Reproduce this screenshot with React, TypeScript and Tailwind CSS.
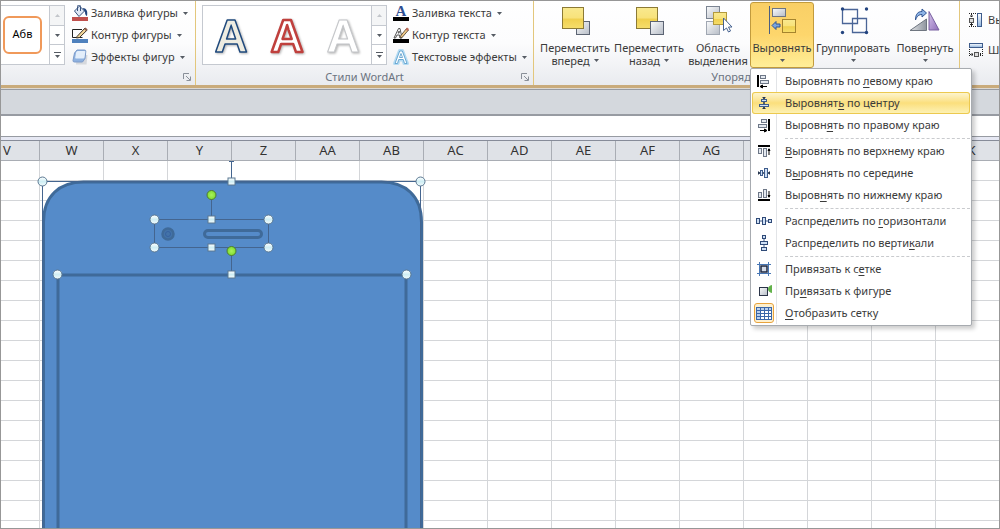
import { ReactNode } from "react";

type IconProps = { children: ReactNode; size?: string; box?: string };

function Svg({ children, size = "size-4", box = "0 0 16 16" }: IconProps) {
  return (
    <svg viewBox={box} className={`${size} shrink-0`} fill="none" aria-hidden="true">
      {children}
    </svg>
  );
}

/* small ribbon icons */

const FillIcon = (
  <Svg>
    <path d="M2.5 6 7.5 1l5 5-5.5 5.5z" fill="#dfe8f5" stroke="#38537f" />
    <path d="M5.5 6V1.5a1.5 1.5 0 0 1 3 0V6" stroke="#38537f" />
    <path d="M10.5 3c4 0 5.500 3 4.500 8-1.500-.5-2-2-2-4z" fill="#24467f" />
    <rect y="12" width="16" height="4" fill="#c0504d" />
  </Svg>
);

const OutlineIcon = (
  <Svg>
    <path d="M10 2.5H.5v8h10" stroke="#222" />
    <path d="M5 9.5 13 1l2.200 2-7.700 7.500-3 .5z" fill="#f4d79a" stroke="#3d3427" />
    <path d="m12 2 1.500-1.500 2 2L14 4z" fill="#8c5a4a" />
    <rect y="12" width="16" height="4" fill="#4f81bd" />
  </Svg>
);

const EffectsIcon = (
  <Svg>
    <path d="M5 6h10.500l-1 9.500H4z" fill="#c9ccd2" opacity=".7" />
    <path d="M5 1h7.500q1.500 0 1.300 1.500L13 9.500 10.500 13h-8Q.8 13 1 11.500L2.500 4z" fill="#8fb2e0" stroke="#7c9bca" />
    <path d="M5.500 2h7q1 0 .8 1l-.8 5.500q-.2 1-1.200 1H4q-1 0-.8-1L4.200 3z" fill="#e3eefb" />
  </Svg>
);

const TextFillIcon = (
  <Svg>
    <text x="8" y="11" textAnchor="middle" fontFamily="Liberation Serif, serif" fontSize="15" fontWeight="700" fill="#2f4f93">А</text>
    <rect y="12" width="16" height="4" fill="#000" />
  </Svg>
);

const TextOutlineIcon = (
  <Svg>
    <path d="M1 11 5.500 1.500H7L9 11H7l-.5-3H4l-1.500 3zM5 6h1.200V4z" stroke="#555" />
    <path d="M7.500 9l6-7.500 2 1.500-6 7-2.500 1z" fill="#f0c987" stroke="#4a3d2c" strokeWidth=".8" />
    <path d="m12.500 2.500 1.500-2L16 2l-1.500 2z" fill="#c06a5a" />
    <rect y="12" width="16" height="4" fill="#000" />
  </Svg>
);

const TextEffectsIcon = (
  <Svg>
    <path d="M1.500 14.500 6.500 1.500h3l5 13h-3.500L10 11H6l-1 3.500z" fill="#fff" stroke="#b5dbf2" strokeWidth="3" strokeLinejoin="round" />
    <path d="M2 14.500 6.700 2h2.600L14 14.500h-2.500l-1.200-4H5.700l-1.200 4zM6.500 8.500h3L8 4.500z" fill="#fff" stroke="#5fa2cf" strokeWidth=".9" />
  </Svg>
);

/* large ribbon icons */

const Gradients = () => (
  <svg className="absolute size-0" aria-hidden="true">
    <defs>
      <linearGradient id="yellow" x2="0" y2="1">
        <stop offset="0" stopColor="#f9e98f" />
        <stop offset=".5" stopColor="#f8e27a" />
        <stop offset=".55" stopColor="#f0d04f" />
        <stop offset="1" stopColor="#f6de6c" />
      </linearGradient>
      <linearGradient id="grey" x2="1" y2="1">
        <stop offset="0" stopColor="#fafbfc" />
        <stop offset="1" stopColor="#b6bcc6" />
      </linearGradient>
      <linearGradient id="purple" x2="1" y2="1">
        <stop offset="0" stopColor="#d6c4ec" />
        <stop offset="1" stopColor="#8f6db8" />
      </linearGradient>
      <linearGradient id="slope" x2="1" y2="0">
        <stop offset="0" stopColor="#e3e5e8" />
        <stop offset="1" stopColor="#8f959e" />
      </linearGradient>
      <linearGradient id="cell" x2="0" y2="1">
        <stop offset="0" stopColor="#fff" />
        <stop offset="1" stopColor="#8fb3dc" />
      </linearGradient>
      <linearGradient id="handle" x2="0" y2="1">
        <stop offset="0" stopColor="#fff" />
        <stop offset=".5" stopColor="#cfeef4" />
        <stop offset="1" stopColor="#f2fbfd" />
      </linearGradient>
      <radialGradient id="green">
        <stop offset="0" stopColor="#a9f25a" />
        <stop offset="1" stopColor="#7fdc30" />
      </radialGradient>
    </defs>
  </svg>
);

function Large({ children }: { children: ReactNode }) {
  return <Svg size="size-8" box="0 0 32 32">{children}</Svg>;
}

const ForwardIcon = (
  <Large>
    <rect x="17.500" y="15.500" width="13" height="13" fill="url(#grey)" stroke="#5c6473" />
    <rect x="3.500" y="1.500" width="21" height="21" fill="url(#yellow)" stroke="#8c7a35" />
  </Large>
);

const BackwardIcon = (
  <Large>
    <rect x="3.500" y="1.500" width="21" height="21" fill="url(#yellow)" stroke="#8c7a35" />
    <rect x="17.500" y="15.500" width="13" height="13" fill="url(#grey)" stroke="#5c6473" />
  </Large>
);

const SelectionIcon = (
  <Large>
    <rect x="4.500" y=".5" width="13" height="12" fill="url(#grey)" stroke="#7b8492" />
    <rect x="4.500" y="15.500" width="13" height="13" fill="url(#grey)" stroke="#a0a7b2" />
    <rect x="11.500" y="6.500" width="13" height="12" fill="url(#yellow)" stroke="#b39a3c" />
    <path d="M21.500 12v12.500l3-2.500 2 4 2-1-2-4H30z" fill="#fff" stroke="#45618f" />
  </Large>
);

const AlignIcon = (
  <Large>
    <path d="M3.500 0v28" stroke="#4b5f82" />
    <rect x="6.500" y="2.500" width="13" height="8" fill="url(#grey)" stroke="#6d7482" />
    <rect x="16.500" y="13.500" width="13" height="13" fill="url(#yellow)" stroke="#a5842d" />
    <path d="m6 19.500 4-4V18h4v3h-4v2.500z" fill="#79a5e0" stroke="#315592" />
  </Large>
);

const GroupIcon = (
  <Large>
    <path d="M5.500 3.500h15v14h-15zM15.500 12.500h14v14h-14z" stroke="#4a6597" strokeWidth="1.300" />
    <g fill="#23447f">
      <circle cx="5.500" cy="3" r="1.700" />
      <circle cx="29.500" cy="3" r="1.700" />
      <circle cx="5.500" cy="26.500" r="1.700" />
      <circle cx="29.500" cy="26.500" r="1.700" />
    </g>
  </Large>
);

const RotateIcon = (
  <Large>
    <path d="M20 5.500V24h10z" fill="url(#purple)" stroke="#7860a0" />
    <path d="M1 24.500 17.500 13v11.500z" fill="url(#slope)" stroke="#6f7680" />
    <path d="M6.500 14c0-6 2.500-8.500 6.500-8.500V3l4.500 4L13 11V8.500c-3 0-5 1.500-6.500 5.500z" fill="#8db4e6" stroke="#315592" />
  </Large>
);

const HeightIcon = (
  <Svg>
    <path d="M1 1.500h7M1 14.500h7M3.500 2v3M3.500 11v3" stroke="#222" strokeDasharray="1 1" />
    <path d="M2 4h3M2 12.500h3" stroke="#222" />
    <rect x="1.500" y="6.500" width="4" height="4" fill="#ddd" stroke="#555" />
    <rect x="9.500" y="1.500" width="4" height="13" fill="url(#cell)" stroke="#3e5c8c" />
  </Svg>
);

const WidthIcon = (
  <Svg>
    <rect x="1.500" y="1.500" width="13" height="4" fill="url(#cell)" stroke="#3e5c8c" />
    <path d="M1.500 7v7M14.500 7v7M2 12.500h12" stroke="#222" strokeDasharray="1 1" />
    <path d="M4 11v3M12.500 11v3" stroke="#222" />
    <rect x="6.500" y="10.500" width="4" height="4" fill="#ddd" stroke="#555" />
  </Svg>
);

/* menu icons */

const LeftIcon = (
  <Svg>
    <rect x="1" y="2" width="2" height="12" fill="#000" />
    <rect x="4.500" y="2.500" width="5" height="3" fill="#e4e9f0" stroke="#6d7787" />
    <rect x="4.500" y="7.500" width="8" height="3" fill="#e4e9f0" stroke="#6d7787" />
    <path d="M4 13.500h7M6.500 12v3L4 13.500z" fill="#000" stroke="#000" />
  </Svg>
);

const CenterIcon = (
  <Svg>
    <path d="M8 2v12" stroke="#27364f" strokeWidth="1.500" />
    <rect x="5.500" y="4.500" width="5" height="2" fill="#cfe0f5" stroke="#3e5c8c" />
    <rect x="3.500" y="9.500" width="9" height="2" fill="#cfe0f5" stroke="#3e5c8c" />
    <path d="M6 2h4L8 4zM6 14h4l-2-2z" fill="#27364f" />
  </Svg>
);

const RightIcon = (
  <Svg>
    <rect x="12" y="2" width="2" height="12" fill="#000" />
    <rect x="5.500" y="2.500" width="5" height="3" fill="#e4e9f0" stroke="#6d7787" />
    <rect x="2.500" y="7.500" width="8" height="3" fill="#e4e9f0" stroke="#6d7787" />
    <path d="M4 13.500h7M8.500 12v3l2.500-1.500z" fill="#000" stroke="#000" />
  </Svg>
);

const TopIcon = (
  <Svg>
    <rect x="2" y="2" width="12" height="2" fill="#000" />
    <rect x="2.500" y="5.500" width="3" height="5" fill="#e4e9f0" stroke="#6d7787" />
    <rect x="7.500" y="5.500" width="3" height="8" fill="#e4e9f0" stroke="#6d7787" />
    <path d="M13 5.500V12M12 7.500h2L13 6z" fill="#000" stroke="#000" />
  </Svg>
);

const MiddleIcon = (
  <Svg>
    <path d="M2 8h12" stroke="#27364f" strokeWidth="1.500" />
    <rect x="4.500" y="5.500" width="2" height="5" fill="#cfe0f5" stroke="#3e5c8c" />
    <rect x="8.500" y="3.500" width="3" height="9" fill="#cfe0f5" stroke="#3e5c8c" />
    <path d="M2 6v4l2-2zM14 6v4l-2-2z" fill="#27364f" />
  </Svg>
);

const BottomIcon = (
  <Svg>
    <rect x="2" y="12" width="12" height="2" fill="#000" />
    <rect x="2.500" y="5.500" width="3" height="5" fill="#e4e9f0" stroke="#6d7787" />
    <rect x="7.500" y="2.500" width="3" height="8" fill="#e4e9f0" stroke="#6d7787" />
    <path d="M13 4v6.500M12 8.500h2L13 10z" fill="#000" stroke="#000" />
  </Svg>
);

const HorizontalIcon = (
  <Svg>
    <path d="M1 8h14" stroke="#3e5c8c" />
    <rect x=".5" y="5.500" width="3" height="5" fill="#cfe0f5" stroke="#2f4a78" />
    <rect x="6.500" y="4.500" width="3" height="7" fill="#cfe0f5" stroke="#2f4a78" />
    <rect x="12.500" y="6.500" width="3" height="3" fill="#cfe0f5" stroke="#2f4a78" />
  </Svg>
);

const VerticalIcon = (
  <Svg>
    <path d="M8 1v14" stroke="#3e5c8c" />
    <rect x="6.500" y=".5" width="3" height="3" fill="#cfe0f5" stroke="#2f4a78" />
    <rect x="4.500" y="6.500" width="7" height="3" fill="#cfe0f5" stroke="#2f4a78" />
    <rect x="5.500" y="12.500" width="5" height="3" fill="#cfe0f5" stroke="#2f4a78" />
  </Svg>
);

const SnapGridIcon = (
  <Svg>
    <path d="M3.500 1v14M12.500 1v14M1 3.500h14M1 12.500h14" stroke="#4877b5" />
    <rect x="5" y="5" width="6" height="6" fill="#d5dbe6" stroke="#1c2740" strokeWidth="1.500" />
  </Svg>
);

const SnapShapeIcon = (
  <Svg>
    <rect x="3.500" y="4.500" width="8" height="8" fill="url(#grey)" stroke="#2b3448" />
    <path d="M16 2c-2.500.5-4 2-4 4s1.500 3.500 4 4z" fill="#63b24b" />
  </Svg>
);

const GridIcon = (
  <Svg>
    <rect x=".5" y="2.500" width="15" height="12" fill="#fff" stroke="#3a66a8" />
    <path d="M1 3h14v2.500H1zM1 3h3v11H1z" fill="#b9d0ee" />
    <path d="M4.500 3v11M8.500 3v11M12.500 3v11M1 5.500h14M1 8.500h14M1 11.500h14" stroke="#3a66a8" />
  </Svg>
);

const smallShape = [
  { label: "Заливка фигуры", icon: FillIcon },
  { label: "Контур фигуры", icon: OutlineIcon },
  { label: "Эффекты фигур", icon: EffectsIcon },
];

const smallText = [
  { label: "Заливка текста", icon: TextFillIcon },
  { label: "Контур текста", icon: TextOutlineIcon },
  { label: "Текстовые эффекты", icon: TextEffectsIcon },
];

// label is split around the underlined access key
type MenuItem = { label: [string, string, string]; icon: ReactNode; active?: boolean; checked?: boolean };

const menu: MenuItem[][] = [
  [
    { label: ["Выровнять по ", "л", "евому краю"], icon: LeftIcon },
    { label: ["Выровнят", "ь", " по центру"], icon: CenterIcon, active: true },
    { label: ["Выровн", "я", "ть по правому краю"], icon: RightIcon },
  ],
  [
    { label: ["", "В", "ыровнять по верхнему краю"], icon: TopIcon },
    { label: ["В", "ы", "ровнять по середине"], icon: MiddleIcon },
    { label: ["Выров", "н", "ять по нижнему краю"], icon: BottomIcon },
  ],
  [
    { label: ["Распределить по ", "г", "оризонтали"], icon: HorizontalIcon },
    { label: ["Распределить по верти", "к", "али"], icon: VerticalIcon },
  ],
  [
    { label: ["Привязать к с", "е", "тке"], icon: SnapGridIcon },
    { label: ["Пр", "и", "вязать к фигуре"], icon: SnapShapeIcon },
    { label: ["", "О", "тобразить сетку"], icon: GridIcon, checked: true },
  ],
];

const columns = ["W", "X", "Y", "Z", "AA", "AB", "AC", "AD", "AE", "AF", "AG", "AH", "AI", "AJ", "AK"];
const rows = Array.from({ length: 19 }, (_, i) => i);

function Arrow({ muted = false }: { muted?: boolean }) {
  return (
    <svg viewBox="0 0 5 3" className={`h-[3px] w-[5px] shrink-0 ${muted ? "text-[#c3c6cb]" : "text-[#555b63]"}`} aria-hidden="true">
      <path d={muted ? "M0 3h5L2.500 0z" : "M0 0h5L2.500 3z"} fill="currentColor" />
    </svg>
  );
}

function GalleryScroll() {
  return (
    <div className="flex w-[15px] flex-col divide-y divide-[#c5c9d0] border-l border-[#c5c9d0]">
      <button aria-label="Вверх" className="flex flex-1 items-center justify-center bg-[#f4f5f6]">
        <Arrow muted />
      </button>
      <button aria-label="Вниз" className="flex flex-1 items-center justify-center">
        <Arrow />
      </button>
      <button aria-label="Дополнительно" className="flex flex-1 flex-col items-center justify-center gap-0.5">
        <span className="h-px w-[7px] bg-[#555b63]" />
        <Arrow />
      </button>
    </div>
  );
}

function SmallButtons({ items }: { items: typeof smallShape }) {
  return (
    <div className="flex flex-col pt-px">
      {items.map((item) => (
        <button key={item.label} className="flex h-[22px] items-center gap-[3px] whitespace-nowrap">
          {item.icon}
          <span>{item.label}</span>
          <span className="pl-0.5">
            <Arrow />
          </span>
        </button>
      ))}
    </div>
  );
}

function GroupFooter({ title }: { title?: string }) {
  return (
    <div className="relative flex h-4 items-center justify-center text-[#6b7380]">
      {title}
      <button aria-label="Параметры" className="absolute top-1 right-1">
        <svg viewBox="0 0 8 8" className="size-2" fill="none" stroke="#8a9099" aria-hidden="true">
          <path d="M.5 6V.5H6M3 3l4 4M7.500 3.500v4h-4" />
        </svg>
      </button>
    </div>
  );
}

type LargeButtonProps = { icon: ReactNode; lines: [string, string?]; width: string; active?: boolean; arrow?: boolean };

function LargeButton({ icon, lines, width, active, arrow = true }: LargeButtonProps) {
  return (
    <button
      className={`flex h-[66px] shrink-0 flex-col items-center rounded-[3px] border pt-[3px] leading-[13px] whitespace-nowrap ${width} ${
        active ? "border-[#c29b3d] bg-linear-to-b from-[#f9cf66] via-[#fdd66c] to-[#ffee98]" : "border-transparent"
      }`}
    >
      {icon}
      <span className="pt-[3px]">{lines[0]}</span>
      <span className="flex h-[13px] items-center gap-1">
        {lines[1]}
        {arrow && <Arrow />}
      </span>
    </button>
  );
}

function AlignMenu() {
  return (
    <div className="absolute top-full left-0 z-20 w-[222px] rounded-[2px] border border-[#a7abb0] bg-white p-px shadow-[3px_3px_4px_rgba(0,0,0,0.2)]" role="menu">
      {menu.map((section, i) => (
        <div key={i}>
          {i > 0 && (
            <div className="flex h-1">
              <div className="w-[25px] border-r border-[#e2e4e7]" />
              <div className="ml-2 h-0 flex-1 self-center border-t border-dashed border-[#c9cbce]" />
            </div>
          )}
          {section.map((item) => (
            <button
              key={item.label.join("")}
              role="menuitem"
              className={`flex h-[22px] w-full items-center whitespace-nowrap ${
                item.active ? "rounded-[3px] bg-linear-to-b from-[#fdf6d4] via-[#fbdf7c] to-[#fdf3b8] ring-1 ring-[#ecc94f] ring-inset" : ""
              }`}
            >
              <span className={`flex h-full w-[25px] items-center justify-center border-r ${item.active ? "border-transparent" : "border-[#e2e4e7]"}`}>
                <span className={item.checked ? "rounded-[3px] border border-[#e8a33d] bg-[#fdf0cf] p-px" : ""}>{item.icon}</span>
              </span>
              <span className="pl-2">
                {item.label[0]}
                <u className="underline-offset-2">{item.label[1]}</u>
                {item.label[2]}
              </span>
            </button>
          ))}
        </div>
      ))}
    </div>
  );
}

function WordArt({ fill, stroke, strokeWidth }: { fill: string; stroke: string; strokeWidth: number }) {
  return (
    <button aria-label="Стиль WordArt" className="flex-1">
      <svg viewBox="0 0 56 58" className="mx-auto h-[58px] w-14 overflow-visible drop-shadow-[1px_1px_1px_rgba(0,0,0,0.3)]" aria-hidden="true">
        <text
          x="28"
          y="46"
          textAnchor="middle"
          fontFamily="Liberation Sans, sans-serif"
          fontSize="46"
          fontWeight="700"
          fill={fill}
          stroke={stroke}
          strokeWidth={strokeWidth}
          strokeLinejoin="round"
        >
          A
        </text>
      </svg>
    </button>
  );
}

function Ribbon() {
  return (
    <header className="flex h-[84px] shrink-0 bg-linear-to-b from-white via-[#fcfcfd] to-[#e9ebef]">
      <section className="flex w-[195px] shrink-0 flex-col border-r border-[#e3c77c]">
        <div className="flex h-[68px] gap-[7px]">
          <div className="mt-1 flex h-[60px] w-16 border-y border-r border-[#c5c9d0] bg-white">
            <div className="flex flex-1 items-center pl-0.5">
              <button className="h-[38px] w-[39px] rounded-md border-2 border-[#f0995a] pb-0.5 text-black">Абв</button>
            </div>
            <GalleryScroll />
          </div>
          <SmallButtons items={smallShape} />
        </div>
        <GroupFooter />
      </section>

      <section className="flex w-[338px] shrink-0 flex-col border-r border-[#e3c77c]">
        <div className="flex h-[68px] gap-[6px] pl-1.5">
          <div className="mt-1 flex h-[60px] w-[185px] border border-[#c5c9d0] bg-white">
            <WordArt fill="#eeece1" stroke="#1f497d" strokeWidth={1.5} />
            <WordArt fill="#ffffff" stroke="#c0403d" strokeWidth={2.5} />
            <WordArt fill="#ffffff" stroke="#c4c6c9" strokeWidth={1} />
            <GalleryScroll />
          </div>
          <SmallButtons items={smallText} />
        </div>
        <GroupFooter title="Стили WordArt" />
      </section>

      <section className="flex w-[426px] shrink-0 flex-col border-r border-[#e3c77c]">
        <div className="flex h-[68px] pt-px pl-1">
          <LargeButton icon={ForwardIcon} lines={["Переместить", "вперед"]} width="w-[74px]" />
          <LargeButton icon={BackwardIcon} lines={["Переместить", "назад"]} width="w-[74px]" />
          <LargeButton icon={SelectionIcon} lines={["Область", "выделения"]} width="w-16" arrow={false} />
          <div className="relative h-[66px]">
            <LargeButton icon={AlignIcon} lines={["Выровнять"]} width="w-16" active />
            <AlignMenu />
          </div>
          <LargeButton icon={GroupIcon} lines={["Группировать"]} width="w-[78px]" />
          <LargeButton icon={RotateIcon} lines={["Повернуть"]} width="w-[66px]" />
        </div>
        <div className="flex h-4 items-center justify-center text-[#6b7380]">Упорядочить</div>
      </section>

      <section className="flex min-w-0 flex-1 flex-col gap-2 overflow-hidden pt-2 pl-2">
        <label className="flex h-[22px] items-center gap-1 whitespace-nowrap">
          {HeightIcon}
          <span>Высота:</span>
          <input className="w-16 border border-[#c5c9d0] bg-white px-1" defaultValue="12,7 см" />
        </label>
        <label className="flex h-[22px] items-center gap-1 whitespace-nowrap">
          {WidthIcon}
          <span>Ширина:</span>
          <input className="w-16 border border-[#c5c9d0] bg-white px-1" defaultValue="6,4 см" />
        </label>
      </section>
    </header>
  );
}

function Drawing() {
  const circles = [[41, 20], [419, 20], [153, 58], [267, 58], [153, 86], [267, 86], [56, 113], [405, 113]];
  const squares = [[230, 20], [210, 58], [210, 86], [230, 113]];
  const rotators = [[210, 34], [230, 90]];

  return (
    <svg viewBox="0 0 440 368" className="absolute top-5 left-0 h-[368px] w-[440px]" fill="none" aria-hidden="true">
      <path d="M42.500 380V61c0-26 16-40 40-40h298c24 0 40 14 40 40v319z" fill="#558bc9" stroke="#3f6a99" strokeWidth="3" />
      <path d="M57 380V114h348v266" stroke="#3f6a99" strokeWidth="3" />
      <circle cx="167" cy="73" r="5.500" fill="#4373a9" stroke="#3f6a99" strokeWidth="2.500" />
      <circle cx="167" cy="73" r="2.500" stroke="#3762a0" />
      <rect x="203.500" y="69.500" width="57" height="7" rx="3.500" stroke="#3f6a99" strokeWidth="3" />
      <path d="M41.500 380V20.500h378V380" stroke="#44658f" />
      <path d="M153.500 58.500h114v28h-114zM210.500 34v24M230.500 90v24M230.500 1v20M228 .5h5" stroke="#44658f" />
      {squares.map(([x, y]) => (
        <rect key={`${x}-${y}`} x={x - 3} y={y - 3} width="7" height="7" fill="url(#handle)" stroke="#5b7892" />
      ))}
      {circles.map(([x, y]) => (
        <circle key={`${x}-${y}`} cx={x + 0.5} cy={y + 0.5} r="4.500" fill="url(#handle)" stroke="#5b7892" />
      ))}
      {rotators.map(([x, y]) => (
        <circle key={`${x}-${y}`} cx={x + 0.5} cy={y} r="4.500" fill="url(#green)" stroke="#4d7a35" />
      ))}
    </svg>
  );
}

function Sheet() {
  return (
    <main className="relative min-h-0 flex-1 overflow-hidden bg-white">
      <table className="w-max table-fixed border-separate border-spacing-0">
        <thead>
          <tr className="h-5 bg-[#dfe2e7] text-[13px] leading-[19px] text-[#333]">
            <th className="w-[39px] border-r border-b border-[#a9adb4] p-0 pl-0.5 text-left font-normal">V</th>
            {columns.map((name) => (
              <th key={name} className="w-16 min-w-16 border-r border-b border-[#a9adb4] p-0 font-normal">
                {name}
              </th>
            ))}
          </tr>
        </thead>
        <tbody>
          {rows.map((row) => (
            <tr key={row} className="h-5">
              <td className="min-w-[39px] border-r border-b border-[#d4d6d9] p-0" />
              {columns.map((name) => (
                <td key={name} className="border-r border-b border-[#d4d6d9] p-0" />
              ))}
            </tr>
          ))}
        </tbody>
      </table>
      <Drawing />
    </main>
  );
}

export default function App() {
  return (
    <div className="flex h-screen flex-col overflow-hidden border border-[#979797] bg-white font-['Noto_Sans',sans-serif] text-[11px] text-[#3b3b3b]">
      <Gradients />
      <Ribbon />
      <div className="h-[3px] shrink-0 bg-[#c9ab7b]" />
      <div className="h-7 shrink-0 border-t border-[#dcd8d2] bg-[#d4d8dd]">
        <div className="h-[27px] border-t border-b-2 border-[#979ba2]" />
      </div>
      <div className="h-[21px] shrink-0 border-b border-[#979ba2] bg-white" />
      <div className="h-1 shrink-0 border-b border-[#878c99] bg-[#e6e8f3]" />
      <Sheet />
    </div>
  );
}
